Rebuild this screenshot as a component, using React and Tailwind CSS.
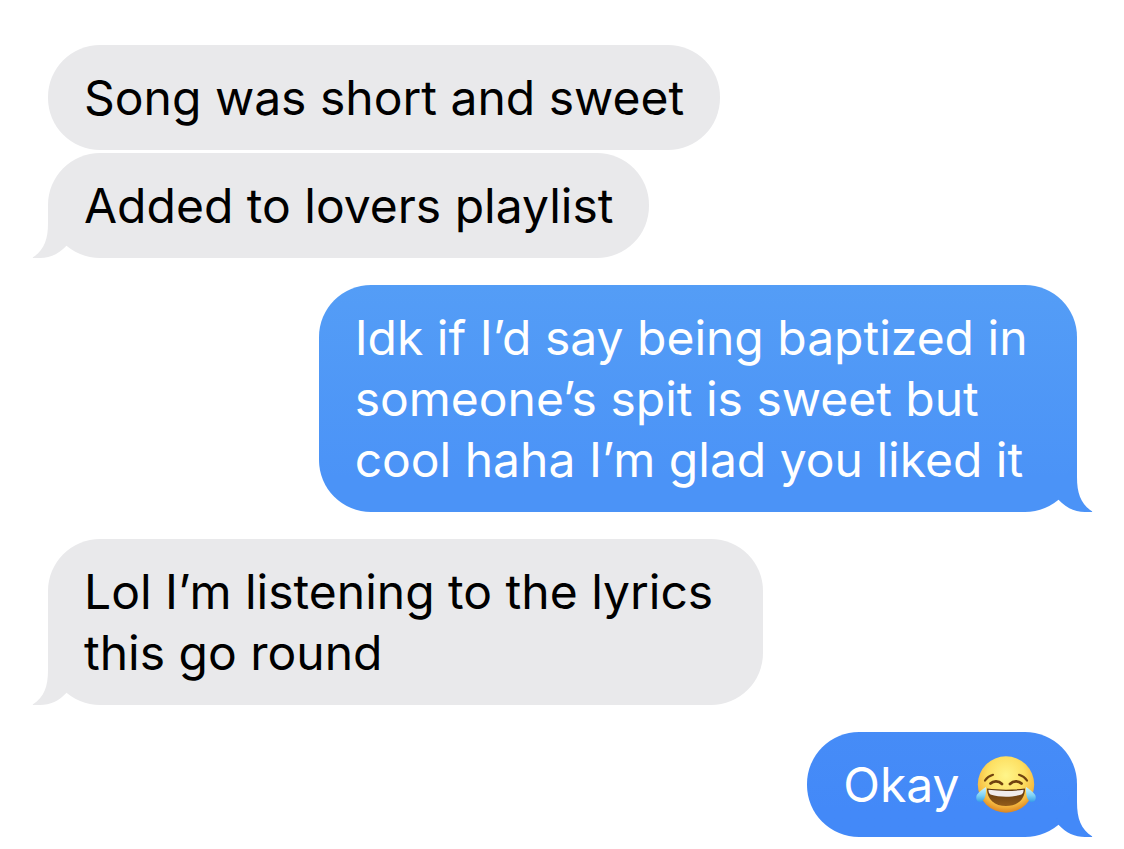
import React from 'react';
import clsx from 'clsx';

const MESSAGES = [
    { id: 1, from: 'them', text: 'Song was short and sweet', tail: false },
    { id: 2, from: 'them', text: 'Added to lovers playlist', tail: true },
    {
        id: 3,
        from: 'me',
        text: 'Idk if I’d say being baptized in \nsomeone’s spit is sweet but \ncool haha I’m glad you liked it',
        tail: true,
        bubble: 'bg-linear-to-b from-[#549df6] to-[#4b93f7] to-85%',
        tailColor: 'text-[#4b93f7]',
    },
    { id: 4, from: 'them', text: 'Lol I’m listening to the lyrics \nthis go round', tail: true },
    {
        id: 5,
        from: 'me',
        text: 'Okay ',
        joy: true,
        tail: true,
        bubble: 'bg-linear-to-b from-[#468cf7] to-[#4389f8] to-75%',
        tailColor: 'text-[#4389f8]',
    },
];

function Tail({ className }) {
    return (
        <svg
            className={clsx('absolute bottom-0', className)}
            width="48"
            height="53"
            viewBox="0 0 48 53"
            fill="currentColor"
            aria-hidden="true"
        >
            <path d="M16 0V18C16 35 12 45 1 52.3C0.6 52.6 0.8 53 1.4 53H8C18 53 27 49 35 40.2L38 38L16 0Z" />
        </svg>
    );
}

function JoyEmoji() {
    return (
        <svg className="mr-1 ml-0.5 shrink-0" width="62" height="60" viewBox="0 0 62 60" role="img" aria-label="Face with tears of joy">
            <defs>
                <radialGradient id="face" cx="0.5" cy="0.34" r="0.66">
                    <stop offset="0" stopColor="#fff58a" />
                    <stop offset="0.5" stopColor="#fde063" />
                    <stop offset="0.8" stopColor="#f6bb42" />
                    <stop offset="1" stopColor="#dc8420" />
                </radialGradient>
                <linearGradient id="mouth" x1="0" y1="0" x2="0" y2="1">
                    <stop offset="0" stopColor="#5a340e" />
                    <stop offset="1" stopColor="#935c1a" />
                </linearGradient>
                <linearGradient id="tear" x1="0" y1="0" x2="0" y2="1">
                    <stop offset="0" stopColor="#d3f5fc" />
                    <stop offset="0.55" stopColor="#80d3f5" />
                    <stop offset="1" stopColor="#369ee8" />
                </linearGradient>
            </defs>
            <circle cx="31" cy="29.5" r="28.2" fill="url(#face)" />
            <g fill="none" stroke="#70420f" strokeLinecap="round">
                <path d="M10 25.500C12 22.500 14.500 20.800 18 19.800" strokeWidth="2.200" />
                <path d="M52 25.500C50 22.500 47.500 20.800 44 19.800" strokeWidth="2.200" />
                <path d="M15.500 28.500C18.500 25.500 23.500 25.500 27 29" strokeWidth="2.800" />
                <path d="M35 29C38.500 25.500 43.500 25.500 46.500 28.500" strokeWidth="2.800" />
            </g>
            <path d="M12 33.500C24 35 38 35 50 33.500C50 45 42 51 31 51C20 51 12 45 12 33.500Z" fill="url(#mouth)" />
            <path d="M13.500 34.800C25 36.300 37 36.300 48.500 34.800Q49 37.500 46.500 39.500C37 42.500 25 42.500 15.500 39.500Q13 37.500 13.500 34.800Z" fill="#f0ecec" />
            <path d="M11 32C11.500 40 9.500 47 5.200 47C1.800 47 0.400 43.500 1.800 40C3.800 36.500 7.500 34.500 11 32Z" fill="url(#tear)" />
            <path d="M51 32C50.500 40 52.500 47 56.800 47C60.200 47 61.600 43.500 60.200 40C58.200 36.500 54.500 34.500 51 32Z" fill="url(#tear)" />
        </svg>
    );
}

function Message({ message, grouped }) {
    const mine = message.from === 'me';
    return (
        <li className={clsx('flex', mine ? 'justify-end' : 'justify-start', grouped ? 'mt-[3px]' : 'mt-[27px] first:mt-0')}>
            <div
                className={clsx(
                    'relative rounded-[52px] px-9 py-[22px]',
                    mine ? 'text-white' : 'bg-[#e9e9eb] text-black',
                    message.bubble
                )}
            >
                {message.tail && (
                    <Tail className={mine ? clsx('-right-4 -scale-x-100', message.tailColor) : '-left-4 text-[#e9e9eb]'} />
                )}
                <div className="relative flex items-center">
                    <p className="whitespace-pre">{message.text}</p>
                    {message.joy && <JoyEmoji />}
                </div>
            </div>
        </li>
    );
}

export default function App() {
    return (
        <main className="min-h-screen bg-white pt-[45px] pr-[47px] pb-3 pl-12 font-['Inter',sans-serif] text-5xl leading-[61px]">
            <ul className="flex flex-col">
                {MESSAGES.map((message, i) => (
                    <Message
                        key={message.id}
                        message={message}
                        grouped={i > 0 && MESSAGES[i - 1].from === message.from}
                    />
                ))}
            </ul>
        </main>
    );
}
